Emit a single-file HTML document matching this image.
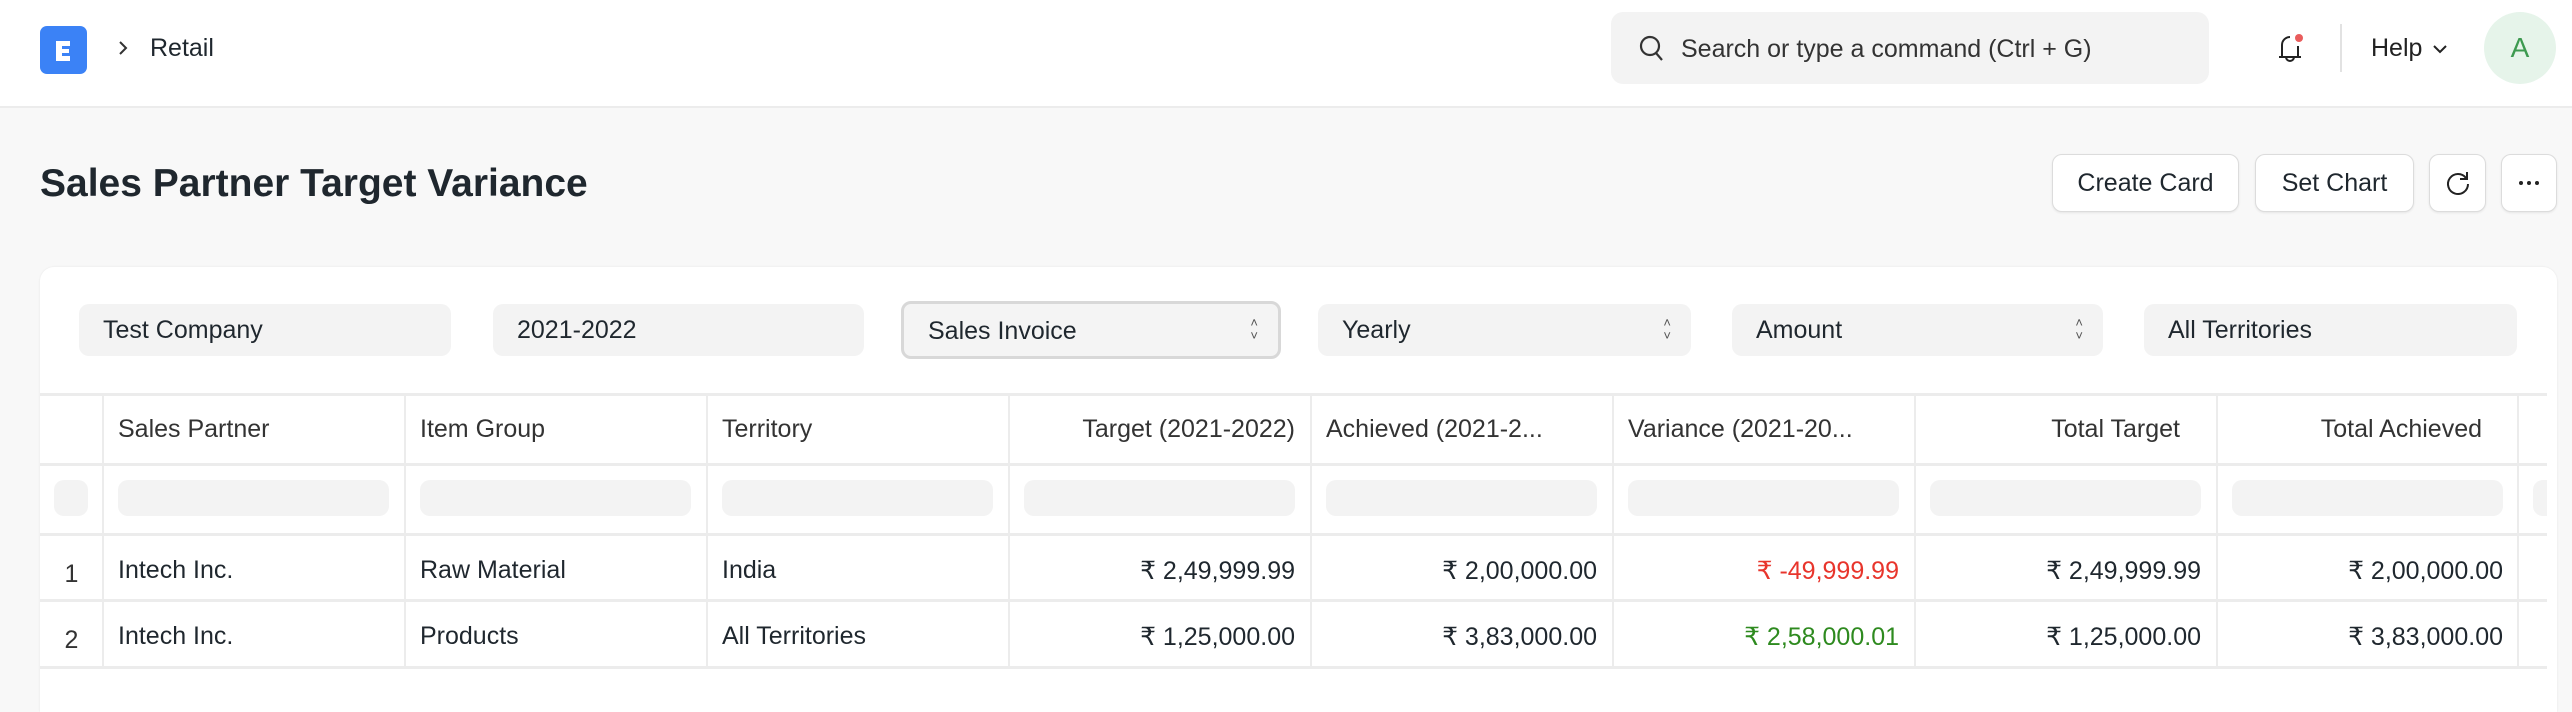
<!DOCTYPE html>
<html style="width:2572px;height:712px;overflow:hidden"><head><meta charset="utf-8">
<style>
*{box-sizing:border-box;margin:0;padding:0}
body{width:2572px;height:712px;overflow:hidden;background:#f8f8f8;font-family:"Liberation Sans",Arial,sans-serif;color:#1f272e;position:relative}
.abs{position:absolute}
.hdr{left:0;top:0;width:2572px;height:108px;background:#fff;border-bottom:2px solid #ececec}
.logo{left:40px;top:26px;width:47px;height:48px;background:#3b82f6;border-radius:7px}
.t25{font-size:25px}
.search{left:1611px;top:12px;width:598px;height:72px;background:#f3f3f3;border-radius:12px}
.btn{top:154px;height:58px;background:#fff;border:1px solid #dcdcdc;border-radius:10px;box-shadow:0 1px 2px rgba(0,0,0,.08);font-size:25px;display:flex;align-items:center;justify-content:center}
.card{left:40px;top:267px;width:2517px;height:445px;background:#fff;border-radius:14px 14px 0 0;box-shadow:0 0 2px rgba(0,0,0,.08)}
.flt{top:304px;height:52px;background:#f3f3f3;border-radius:10px;font-size:25px;line-height:52px;padding-left:24px}
.arr{position:absolute;right:20px;top:12px;font-size:13px;line-height:13px;color:#555;text-align:center}
.vl{width:2px;background:#ececec}
.hl{height:3px;background:#ececec}
.cell{font-size:25px;position:absolute}
.inp{position:absolute;top:480px;height:36px;background:#f3f3f3;border-radius:10px}
</style></head><body>
<div class="abs hdr"></div>
<div class="abs logo"><svg width="47" height="48" viewBox="0 0 47 48"><path d="M16 15h14v5H22v3h7v4h-7v3h8v5H16z" fill="#fff"/></svg></div>
<svg class="abs" style="left:117px;top:39px" width="12" height="18" viewBox="0 0 12 18"><path d="M3 3l6 6-6 6" stroke="#333" stroke-width="2" fill="none"/></svg>
<div class="abs t25" style="left:150px;top:34px;color:#1f272e">Retail</div>
<div class="abs search"></div>
<svg class="abs" style="left:1638px;top:34px" width="28" height="30" viewBox="0 0 28 30"><circle cx="12" cy="12" r="9" stroke="#333" stroke-width="2.2" fill="none"/><path d="M18 19l6 7" stroke="#333" stroke-width="2.2"/></svg>
<div class="abs t25" style="left:1681px;top:35px;color:#333">Search or type a command (Ctrl + G)</div>
<svg class="abs" style="left:2274px;top:30px" width="34" height="36" viewBox="0 0 34 36"><path d="M5 27h22M8 27V15a8 8 0 0 1 8-8M24 27V16M12 27a4 4 0 0 0 8 0" stroke="#222" stroke-width="2" fill="none"/><circle cx="25" cy="8" r="4" fill="#e95c5c"/></svg>
<div class="abs" style="left:2340px;top:24px;width:2px;height:48px;background:#e2e2e2"></div>
<div class="abs t25" style="left:2371px;top:34px;color:#222">Help</div>
<svg class="abs" style="left:2432px;top:43px" width="16" height="12" viewBox="0 0 16 12"><path d="M2 3l6 6 6-6" stroke="#222" stroke-width="2" fill="none"/></svg>
<div class="abs" style="left:2484px;top:12px;width:72px;height:72px;border-radius:50%;background:#e6f4ea;color:#3d9a50;font-size:28px;line-height:72px;text-align:center">A</div>
<div class="abs" style="left:40px;top:162px;font-size:39px;font-weight:bold;color:#1f272e">Sales Partner Target Variance</div>
<div class="abs btn" style="left:2052px;width:187px">Create Card</div>
<div class="abs btn" style="left:2255px;width:159px">Set Chart</div>
<div class="abs btn" style="left:2429px;width:57px"><svg width="28" height="28" viewBox="0 0 28 28"><path d="M22 9A10 10 0 1 0 24 15" stroke="#222" stroke-width="2" fill="none"/><path d="M23 3v7h-7" stroke="#222" stroke-width="2" fill="none"/></svg></div>
<div class="abs btn" style="left:2501px;width:56px"><svg width="24" height="6"><circle cx="4" cy="3" r="2" fill="#222"/><circle cx="12" cy="3" r="2" fill="#222"/><circle cx="20" cy="3" r="2" fill="#222"/></svg></div>
<div class="abs card"></div>
<div class="abs flt" style="left:79px;width:372px">Test Company</div>
<div class="abs flt" style="left:493px;width:371px">2021-2022</div>
<div class="abs flt" style="left:901px;width:380px;top:301px;height:58px;line-height:54px;border:3px solid #d8d8d8;background:#f4f4f4">Sales Invoice<div class="arr">˄<br>˅</div></div>
<div class="abs flt" style="left:1318px;width:373px">Yearly<div class="arr">˄<br>˅</div></div>
<div class="abs flt" style="left:1732px;width:371px">Amount<div class="arr">˄<br>˅</div></div>
<div class="abs flt" style="left:2144px;width:373px">All Territories</div>
<div class="abs hl" style="left:40px;top:393px;width:2507px"></div>
<div class="abs hl" style="left:40px;top:463px;width:2507px"></div>
<div class="abs hl" style="left:40px;top:533px;width:2507px"></div>
<div class="abs hl" style="left:40px;top:599px;width:2507px"></div>
<div class="abs hl" style="left:40px;top:666px;width:2507px"></div>
<div class="abs vl" style="left:102px;top:396px;height:270px"></div>
<div class="abs vl" style="left:404px;top:396px;height:270px"></div>
<div class="abs vl" style="left:706px;top:396px;height:270px"></div>
<div class="abs vl" style="left:1008px;top:396px;height:270px"></div>
<div class="abs vl" style="left:1310px;top:396px;height:270px"></div>
<div class="abs vl" style="left:1612px;top:396px;height:270px"></div>
<div class="abs vl" style="left:1914px;top:396px;height:270px"></div>
<div class="abs vl" style="left:2216px;top:396px;height:270px"></div>
<div class="abs vl" style="left:2517px;top:396px;height:270px"></div>
<div class="inp" style="left:54px;width:34px"></div>
<div class="inp" style="left:118px;width:271px"></div>
<div class="inp" style="left:420px;width:271px"></div>
<div class="inp" style="left:722px;width:271px"></div>
<div class="inp" style="left:1024px;width:271px"></div>
<div class="inp" style="left:1326px;width:271px"></div>
<div class="inp" style="left:1628px;width:271px"></div>
<div class="inp" style="left:1930px;width:271px"></div>
<div class="inp" style="left:2232px;width:271px"></div>
<div class="inp" style="left:2533px;width:14px;border-radius:10px 0 0 10px"></div>
<div style="color:#333">
<div class="cell" style="left:118px;top:415px">Sales Partner</div>
<div class="cell" style="left:420px;top:415px">Item Group</div>
<div class="cell" style="left:722px;top:415px">Territory</div>
<div class="cell" style="left:1024px;top:415px;width:271px;text-align:right">Target (2021-2022)</div>
<div class="cell" style="left:1326px;top:415px">Achieved (2021-2...</div>
<div class="cell" style="left:1628px;top:415px">Variance (2021-20...</div>
<div class="cell" style="left:1930px;top:415px;width:250px;text-align:right">Total Target</div>
<div class="cell" style="left:2232px;top:415px;width:250px;text-align:right">Total Achieved</div>
</div>
<div class="cell" style="left:40px;top:560px;width:63px;text-align:center;color:#333">1</div>
<div class="cell" style="left:40px;top:626px;width:63px;text-align:center;color:#333">2</div>
<div class="cell" style="left:118px;top:556px">Intech Inc.</div>
<div class="cell" style="left:420px;top:556px">Raw Material</div>
<div class="cell" style="left:722px;top:556px">India</div>
<div class="cell" style="left:1024px;top:556px;width:271px;text-align:right">₹ 2,49,999.99</div>
<div class="cell" style="left:1326px;top:556px;width:271px;text-align:right">₹ 2,00,000.00</div>
<div class="cell" style="left:1628px;top:556px;width:271px;text-align:right;color:#e8352c">₹ -49,999.99</div>
<div class="cell" style="left:1930px;top:556px;width:271px;text-align:right">₹ 2,49,999.99</div>
<div class="cell" style="left:2232px;top:556px;width:271px;text-align:right">₹ 2,00,000.00</div>
<div class="cell" style="left:118px;top:622px">Intech Inc.</div>
<div class="cell" style="left:420px;top:622px">Products</div>
<div class="cell" style="left:722px;top:622px">All Territories</div>
<div class="cell" style="left:1024px;top:622px;width:271px;text-align:right">₹ 1,25,000.00</div>
<div class="cell" style="left:1326px;top:622px;width:271px;text-align:right">₹ 3,83,000.00</div>
<div class="cell" style="left:1628px;top:622px;width:271px;text-align:right;color:#2e8a1f">₹ 2,58,000.01</div>
<div class="cell" style="left:1930px;top:622px;width:271px;text-align:right">₹ 1,25,000.00</div>
<div class="cell" style="left:2232px;top:622px;width:271px;text-align:right">₹ 3,83,000.00</div>
</body></html>
